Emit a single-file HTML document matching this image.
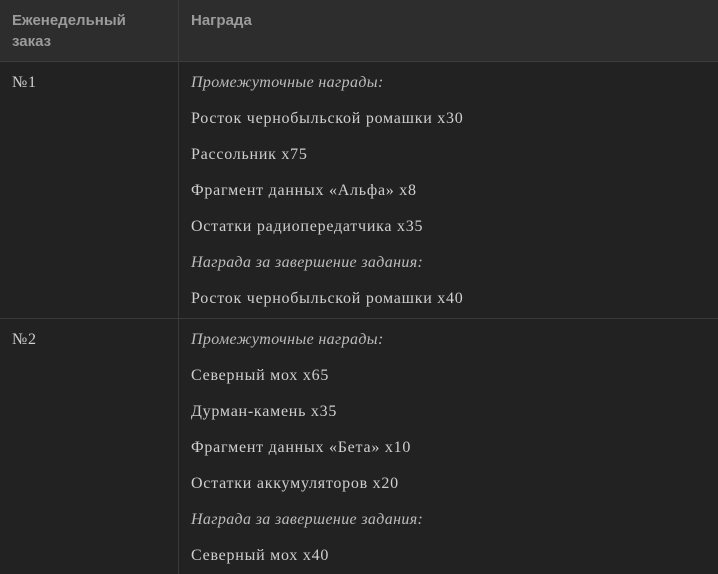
<!DOCTYPE html>
<html><head><meta charset="utf-8"><style>
body{margin:0;background:#222;width:718px;height:574px;overflow:hidden}
.t{position:relative;width:718px;height:574px;font-family:"Liberation Serif","Noto Serif CJK SC",serif}
.h{position:absolute;left:0;top:0;width:718px;height:61px;background:#2d2d2d;border-bottom:1px solid #3c3c3c}
.v{position:absolute;left:178px;top:0;width:1px;height:574px;background:#3a3a3a}
.hb{position:absolute;font-family:"Liberation Sans",sans-serif;font-weight:bold;font-size:15px;line-height:21px;color:#9b9b9b}
.r{position:absolute;left:0;top:318px;width:718px;height:1px;background:#3a3a3a}
.c{position:absolute;font-size:16px;letter-spacing:0.75px;color:#cfcfcf;line-height:36px}
i{color:#bdbdbd;letter-spacing:0.35px}
</style></head><body><div class="t">
<div class="h"></div><div class="v"></div>
<div class="hb" style="left:12px;top:10px">Еженедельный<br>заказ</div>
<div class="hb" style="left:191px;top:10px">Награда</div>
<div class="r"></div>
<div class="c" style="left:12px;top:65px">№1</div>
<div class="c" style="left:191px;top:65px"><i>Промежуточные награды:</i><br>Росток чернобыльской ромашки x30<br>Рассольник x75<br>Фрагмент данных «Альфа» x8<br>Остатки радиопередатчика x35<br><i>Награда за завершение задания:</i><br>Росток чернобыльской ромашки x40</div>
<div class="c" style="left:12px;top:322px">№2</div>
<div class="c" style="left:191px;top:322px"><i>Промежуточные награды:</i><br>Северный мох x65<br>Дурман-камень x35<br>Фрагмент данных «Бета» x10<br>Остатки аккумуляторов x20<br><i>Награда за завершение задания:</i><br>Северный мох x40</div>
</div></body></html>
